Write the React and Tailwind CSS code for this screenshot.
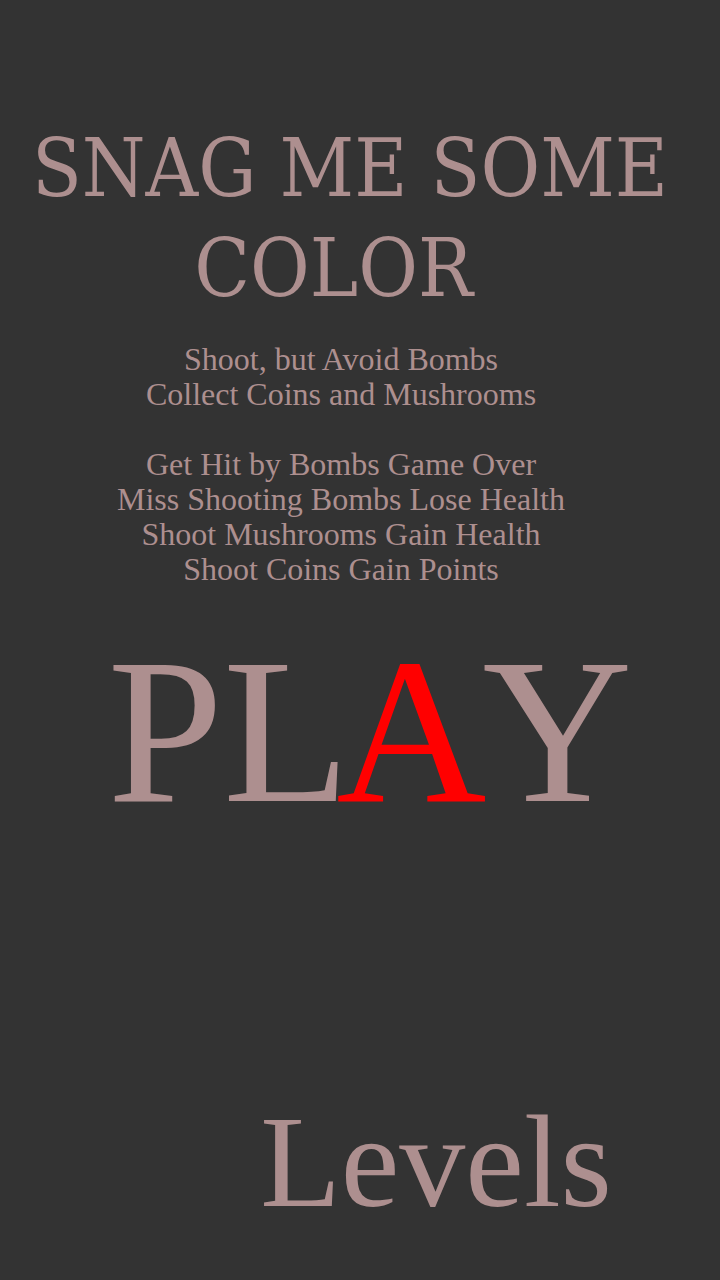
import React from 'react';

const rose = 'text-[#ad8f8f]';

const rules = [
  'Shoot, but Avoid Bombs',
  'Collect Coins and Mushrooms',
  '',
  'Get Hit by Bombs Game Over',
  'Miss Shooting Bombs Lose Health',
  'Shoot Mushrooms Gain Health',
  'Shoot Coins Gain Points',
];

export default function App() {
  return (
    <div className="min-h-screen w-[720px] h-[1280px] bg-[#333333] flex flex-col overflow-hidden">
      {/* Title */}
      <h1
        className={`${rose} pt-[118px] text-center text-[81px] leading-[100px] font-normal font-['DejaVu_Serif',serif] [font-stretch:condensed]`}
      >
        <div className="pr-[20px]">SNAG ME SOME</div>
        <div className="pr-[53px]">COLOR</div>
      </h1>

      {/* Instructions */}
      <div className={`${rose} mt-[24px] pr-[38px] text-center text-[32px] leading-[35px] font-['Liberation_Serif',serif]`}>
        {rules.map((line, i) => (
          <div key={i} className="h-[35px]">{line}</div>
        ))}
      </div>

      {/* Play button */}
      <button className="mt-[40px] self-center pl-[20px] text-[208px] leading-none font-['Liberation_Serif',serif]">
        <span className={rose}>PL</span>
        <span className="-ml-[14px] text-[#ff0000]">A</span>
        <span className={`-ml-[4px] ${rose}`}>Y</span>
      </button>

      {/* Levels */}
      <button className={`${rose} mt-auto mb-[52px] self-end mr-[108px] text-[132px] leading-none font-['Liberation_Serif',serif]`}>
        Levels
      </button>
    </div>
  );
}
